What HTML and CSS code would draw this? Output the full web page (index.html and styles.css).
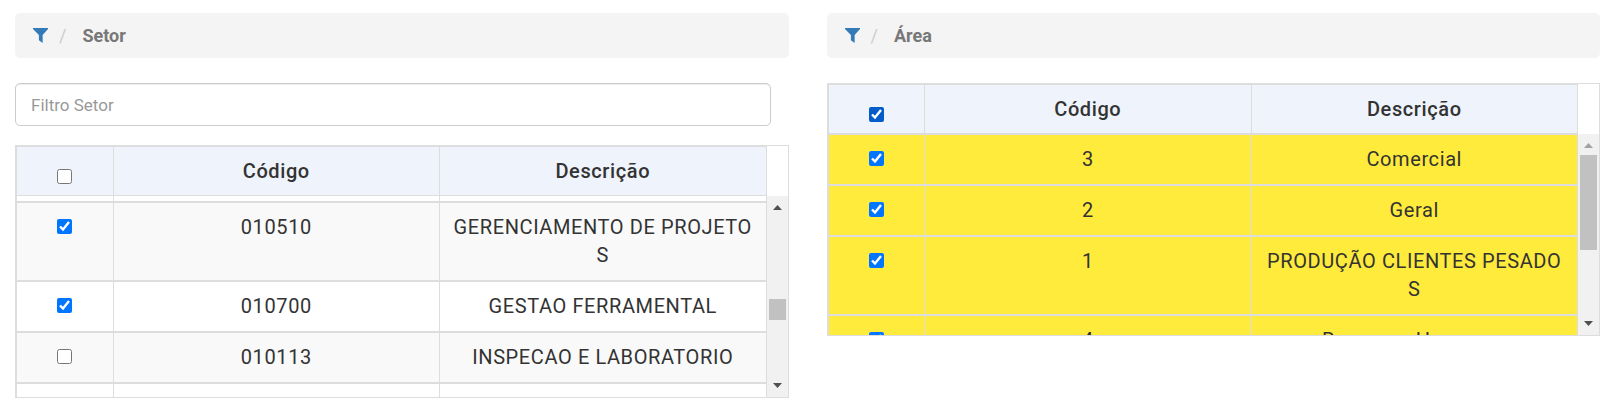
FILE: index.html
```
<!DOCTYPE html>
<html lang="pt-BR">
<head>
  <meta charset="UTF-8">
  <meta name="viewport" content="width=device-width, initial-scale=1.0">
  <title>Filtros</title>
  <link rel="stylesheet" href="styles.css">
</head>
<body>
  <main class="filters">
    <section class="panel">
      <nav class="breadcrumb">
        <a href="#setor" aria-label="Filtrar setor">
          <svg class="icon-filter" viewBox="0 0 14 14"><path d="M0 0h14v1L9 6.500V14L5.500 11.500V6.500L0 1z"/></svg>
        </a>
        <span class="slash">/</span>
        <span class="title">Setor</span>
      </nav>

      <input class="search" type="text" placeholder="Filtro Setor" aria-label="Filtro Setor">

      <div class="grid" id="setor">
        <div class="grid-scroll" data-scroll="45">
          <table>
            <thead>
              <tr>
                <th class="check"><input type="checkbox" aria-label="Selecionar todos"></th>
                <th>Código</th>
                <th>Descrição</th>
              </tr>
            </thead>
            <tbody>
              <tr><td class="check"></td><td></td><td></td></tr>
              <tr>
                <td class="check"><input type="checkbox" aria-label="010510" checked></td>
                <td>010510</td>
                <td>GERENCIAMENTO DE PROJETOS</td>
              </tr>
              <tr>
                <td class="check"><input type="checkbox" aria-label="010700" checked></td>
                <td>010700</td>
                <td>GESTAO FERRAMENTAL</td>
              </tr>
              <tr>
                <td class="check"><input type="checkbox" aria-label="010113"></td>
                <td>010113</td>
                <td>INSPECAO E LABORATORIO</td>
              </tr>
              <tr><td class="check"></td><td></td><td></td></tr>
            </tbody>
          </table>
        </div>
        <div class="scrollbar" aria-hidden="true">
          <svg class="arrow" viewBox="0 0 21 21"><path d="M6 14h9l-4.500-5z"/></svg>
          <div class="track"><div class="thumb thumb-middle"></div></div>
          <svg class="arrow" viewBox="0 0 21 21"><path d="M6 7h9l-4.500 5z"/></svg>
        </div>
      </div>
    </section>

    <section class="panel">
      <nav class="breadcrumb">
        <a href="#area" aria-label="Filtrar área">
          <svg class="icon-filter" viewBox="0 0 14 14"><path d="M0 0h14v1L9 6.500V14L5.500 11.500V6.500L0 1z"/></svg>
        </a>
        <span class="slash">/</span>
        <span class="title">Área</span>
      </nav>

      <div class="grid" id="area">
        <div class="grid-scroll">
          <table>
            <thead>
              <tr>
                <th class="check"><input class="active" type="checkbox" aria-label="Selecionar todas" checked></th>
                <th>Código</th>
                <th>Descrição</th>
              </tr>
            </thead>
            <tbody>
              <tr class="selected">
                <td class="check"><input type="checkbox" aria-label="Comercial" checked></td>
                <td>3</td>
                <td>Comercial</td>
              </tr>
              <tr class="selected">
                <td class="check"><input type="checkbox" aria-label="Geral" checked></td>
                <td>2</td>
                <td>Geral</td>
              </tr>
              <tr class="selected">
                <td class="check"><input type="checkbox" aria-label="Produção clientes pesados" checked></td>
                <td>1</td>
                <td>PRODUÇÃO CLIENTES PESADOS</td>
              </tr>
              <tr class="selected">
                <td class="check"><input type="checkbox" aria-label="Recursos Humanos" checked></td>
                <td>4</td>
                <td>Recursos Humanos</td>
              </tr>
            </tbody>
          </table>
        </div>
        <div class="scrollbar" aria-hidden="true">
          <svg class="arrow disabled" viewBox="0 0 21 21"><path d="M6 14h9l-4.500-5z"/></svg>
          <div class="track"><div class="thumb thumb-top"></div></div>
          <svg class="arrow" viewBox="0 0 21 21"><path d="M6 7h9l-4.500 5z"/></svg>
        </div>
      </div>
    </section>
  </main>

  <script>
    document.querySelectorAll('[data-scroll]').forEach((el) => {
      el.scrollTop = Number(el.dataset.scroll);
    });
  </script>
</body>
</html>
```
FILE: styles.css
```
* {
  box-sizing: border-box;
}

body {
  margin: 0;
  background-color: #fff;
  font-family: Roboto, sans-serif;
  font-size: 18px;
  color: #333;
}

.filters {
  display: grid;
  grid-template-columns: 1fr 1fr;
  align-items: start;
  gap: 38px;
  padding: 13px 1px 0 15px;
}

.panel {
  display: flex;
  flex-direction: column;
  min-width: 0;
}

/* Breadcrumb */
.breadcrumb {
  display: flex;
  align-items: center;
  height: 45px;
  margin-bottom: 25px;
  padding: 0 18px;
  background-color: #f4f4f4;
  border-radius: 5px;
}

.icon-filter {
  display: block;
  width: 15px;
  height: 15px;
  fill: #337ab7;
}

.slash {
  margin: 0 16px 0 11px;
  color: #ccc;
}

.title {
  font-weight: 700;
  color: #777;
}

.search {
  height: 43px;
  margin: 0 18px 19px 0;
  padding: 0 15px;
  border: 1px solid #ccc;
  border-radius: 5px;
  box-shadow: inset 0 1px 1px rgba(0, 0, 0, 0.075);
  font-family: inherit;
  font-size: 17px;
  color: #555;
}

.search::placeholder {
  color: #999;
}

/* Grid */
.grid {
  display: flex;
  border: 1px solid #ddd;
}

.grid-scroll {
  flex: 1;
  height: 251px;
  overflow-y: auto;
  scrollbar-width: none;
}

table {
  width: 100%;
  table-layout: fixed;
  border-collapse: separate;
  border-spacing: 0;
  font-size: 20px;
  line-height: 28px;
  letter-spacing: 0.03em;
}

th,
td {
  height: 51px;
  padding: 10px 10px 11px;
  border: 1px solid #ddd;
  border-left: none;
  text-align: center;
  vertical-align: top;
  word-break: break-all;
}

th {
  position: sticky;
  top: 0;
  z-index: 1;
  height: 50px;
  padding-bottom: 10px;
  background-color: #eff4fc;
  font-weight: 500;
}

th:first-child,
td:first-child {
  border-left: 1px solid #ddd;
}

.check {
  width: 13%;
  padding-top: 16px;
  padding-bottom: 0;
  line-height: 15px;
}

th.check {
  padding-top: 22px;
}

.check input {
  display: block;
  width: 15px;
  height: 15px;
  margin: 0 auto;
}

.check .active {
  accent-color: #005cc8;
}

tbody tr:nth-child(even) {
  background-color: #f9f9f9;
}

tbody tr.selected {
  background-color: #ffeb3b;
}

/* Scrollbar */
.scrollbar {
  display: flex;
  flex-direction: column;
  width: 21px;
  margin-top: 50px;
  background-color: #f1f1f1;
}

.arrow {
  width: 21px;
  height: 21px;
  fill: #505050;
}

.arrow.disabled {
  fill: #a3a3a3;
}

.track {
  flex: 1;
  padding: 0 2px;
}

.thumb {
  background-color: #c1c1c1;
}

.thumb-middle {
  height: 21px;
  margin-top: 82px;
}

.thumb-top {
  height: 95px;
}
```
